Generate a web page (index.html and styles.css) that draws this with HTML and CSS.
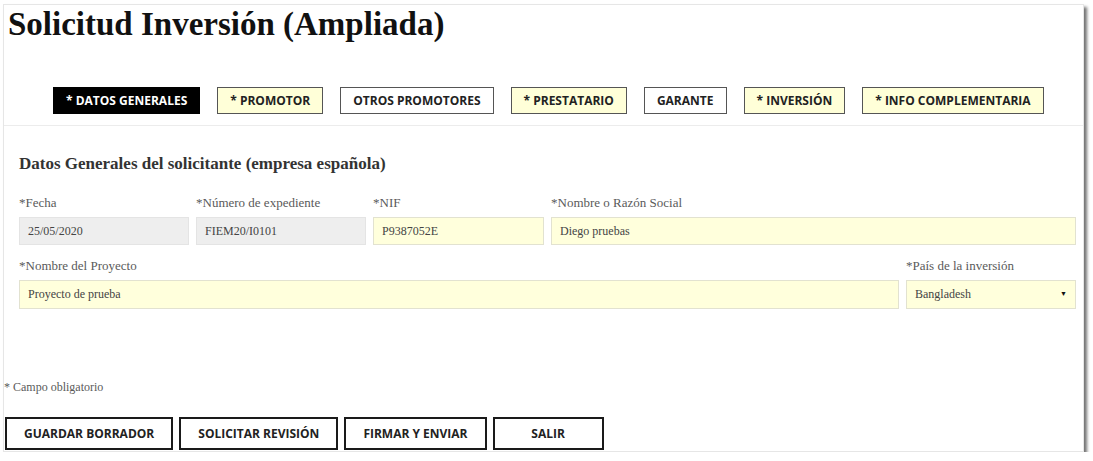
FILE: index.html
```html
<!DOCTYPE html>
<html lang="es">
<head>
  <meta charset="UTF-8" />
  <meta name="viewport" content="width=device-width, initial-scale=1.0"/>
  <title>Solicitud Inversión (Ampliada)</title>
  <link rel="stylesheet" href="styles.css">
</head>
<body>
  <div class="card">
    <h1 class="title">Solicitud Inversión (Ampliada)</h1>

    <div class="tabs">
      <button class="tab active">* DATOS GENERALES</button>
      <button class="tab required">* PROMOTOR</button>
      <button class="tab">OTROS PROMOTORES</button>
      <button class="tab required">* PRESTATARIO</button>
      <button class="tab">GARANTE</button>
      <button class="tab required">* INVERSIÓN</button>
      <button class="tab required">* INFO COMPLEMENTARIA</button>
    </div>

    <div class="section">
      <h2>Datos Generales del solicitante (empresa española)</h2>

      <div class="row row-top">
        <div class="field">
          <label>*Fecha</label>
          <div class="input readonly">25/05/2020</div>
        </div>
        <div class="field">
          <label>*Número de expediente</label>
          <div class="input readonly">FIEM20/I0101</div>
        </div>
        <div class="field">
          <label>*NIF</label>
          <div class="input">P9387052E</div>
        </div>
        <div class="field">
          <label>*Nombre o Razón Social</label>
          <div class="input">Diego pruebas</div>
        </div>
      </div>

      <div class="row row-bottom">
        <div class="field">
          <label>*Nombre del Proyecto</label>
          <div class="input">Proyecto de prueba</div>
        </div>
        <div class="field">
          <label>*País de la inversión</label>
          <div class="input select">
            <span>Bangladesh</span>
            <span class="arrow">▼</span>
          </div>
        </div>
      </div>
    </div>

    <p class="note">* Campo obligatorio</p>

    <div class="actions">
      <button class="btn">GUARDAR BORRADOR</button>
      <button class="btn">SOLICITAR REVISIÓN</button>
      <button class="btn">FIRMAR Y ENVIAR</button>
      <button class="btn">SALIR</button>
    </div>
  </div>
</body>
</html>
```

FILE: styles.css
```css
body {
  margin: 0;
  background: #fff;
  font-family: 'Liberation Serif', 'DejaVu Serif', serif;
  color: #333;
}

.card {
  box-sizing: border-box;
  width: 1081px;
  height: 448px;
  margin: 4px 0 0 3px;
  border: 1px solid #e6e6e6;
  box-shadow: 3px 3px 3px rgba(0, 0, 0, 0.55);
  background: #fff;
}

.title {
  margin: 0;
  padding: 2px 0 0 4px;
  font-size: 33px;
  line-height: 34px;
  font-weight: bold;
  color: #111;
}

.tabs {
  display: flex;
  gap: 17px;
  padding: 46px 0 11px 49px;
  margin-bottom: 10px;
  border-bottom: 1px solid #ececec;
}

.tab {
  height: 27px;
  padding: 0 12px;
  border: 1px solid #555;
  background: #fff;
  color: #222;
  font-family: 'Open Sans', sans-serif;
  font-weight: bold;
  font-size: 12px;
  cursor: pointer;
}

.tab.required {
  background: #ffffd8;
}

.tab.active {
  background: #000;
  border-color: #000;
  color: #fff;
}

.section {
  padding: 0 7px 0 15px;
}

.section h2 {
  margin: 0;
  padding-top: 18px;
  font-size: 17px;
  line-height: 20px;
  color: #333;
}

.row {
  display: grid;
  column-gap: 7px;
}

.row-top {
  grid-template-columns: 170px 170px 171px 1fr;
  margin-top: 21px;
}

.row-bottom {
  grid-template-columns: 1fr 170px;
  margin-top: 13px;
}

.field label {
  display: block;
  font-size: 13px;
  line-height: 16px;
  color: #5a5a5a;
  margin-bottom: 6px;
}

.input {
  box-sizing: border-box;
  height: 28px;
  padding: 0 8px;
  border: 1px solid #e2e2d0;
  background: #ffffdc;
  font-size: 12px;
  line-height: 26px;
  color: #444;
}

.row-bottom .input {
  height: 29px;
  line-height: 27px;
}

.input.readonly {
  background: #eeeeee;
  border-color: #e4e4e4;
}

.select {
  display: flex;
  justify-content: space-between;
}

.arrow {
  font-size: 7px;
  color: #111;
}

.note {
  margin: 71px 0 0 0;
  font-size: 12px;
  line-height: 15px;
  color: #5a5a5a;
}

.actions {
  display: flex;
  gap: 6px;
  margin: 22px 0 0 1px;
}

.btn {
  height: 33px;
  min-width: 111px;
  padding: 0 17px;
  border: 2px solid #1a1a1a;
  background: #fff;
  color: #222;
  font-family: 'Open Sans', sans-serif;
  font-weight: bold;
  font-size: 12px;
  cursor: pointer;
}
```
